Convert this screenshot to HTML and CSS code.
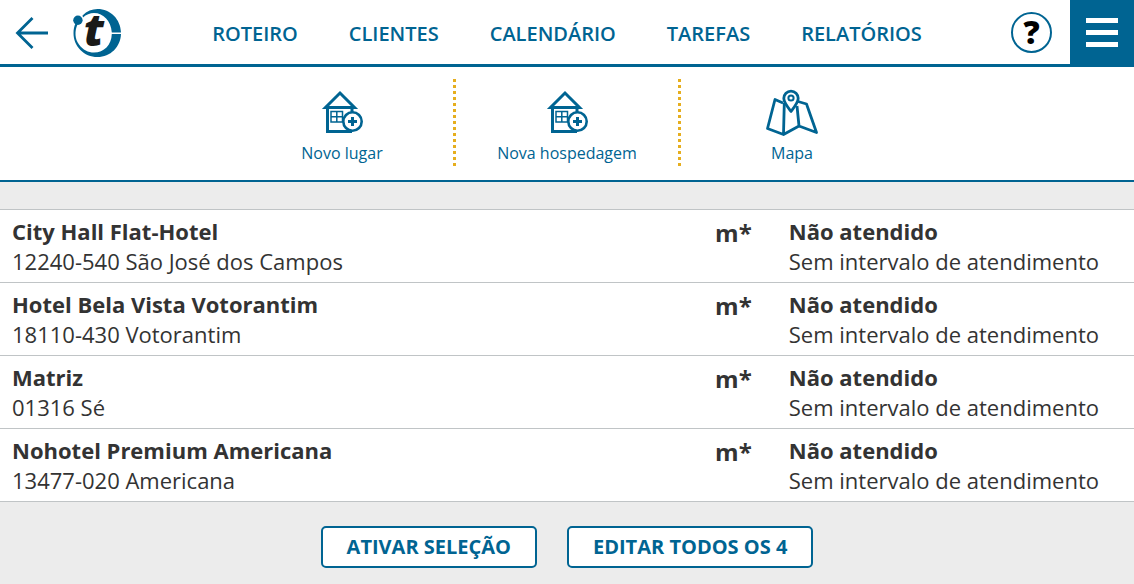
FILE: index.html
```
<!DOCTYPE html>
<html lang="pt-BR">
<head>
<meta charset="utf-8">
<meta name="viewport" content="width=device-width, initial-scale=1">
<title>Clientes</title>
<link rel="stylesheet" href="styles.css">
</head>
<body>
<header class="topbar">
  <div class="brand">
    <button class="icon-button" type="button" aria-label="Voltar">
      <svg width="34" height="34" viewBox="0 0 34 34" fill="none" stroke="currentColor" stroke-width="2.8"><path d="M17.500 2L2.500 17L17.500 32M2.500 17H33"/></svg>
    </button>
    <a class="logo" href="#" aria-label="Início">
      <svg width="50" height="50" viewBox="0 0 50 50">
        <path fill="currentColor" d="M9.500 7.500C14 3 19 1 24.500 1C37.500 1 47.500 11 48 24.500H38.800C38 13 30.500 5 21 5C17 5 13 6.500 10 9.500ZM48 26C47.500 39 37.500 49 24.500 49C11 49 0.500 38.500 0.500 25C0.500 21.500 1.200 18 2.500 15.500L4.500 16.500C1.500 23 1.800 31 6 36.500C10 42 15 44.500 21 44.500C31 44.500 38.500 37 38.800 26Z"/>
        <circle cx="4.900" cy="12.300" r="4.700" fill="currentColor"/>
        <text class="logo-letter" x="11" y="38">t</text>
      </svg>
    </a>
  </div>
  <nav class="nav">
    <a href="#">ROTEIRO</a>
    <a href="#">CLIENTES</a>
    <a href="#">CALENDÁRIO</a>
    <a href="#">TAREFAS</a>
    <a href="#">RELATÓRIOS</a>
  </nav>
  <div class="tools">
    <button class="help" type="button" aria-label="Ajuda">?</button>
    <button class="menu" type="button" aria-label="Menu">
      <svg width="32" height="30" viewBox="0 0 32 30" fill="currentColor"><path d="M0 0h32v5H0zM0 12h32v5H0zM0 24h32v5H0z"/></svg>
    </button>
  </div>
</header>

<div class="actions">
  <a class="action" href="#">
    <svg width="46" height="48" viewBox="0 0 46 48" fill="none" stroke="currentColor">
      <path stroke-width="3" d="M8.500 18V42.500H33M33 18V23M6.500 18.500H35.500L21 4L6.500 18.500Z"/>
      <path stroke-width="1.500" d="M12 22.500H23.500V33H12ZM17.800 22.500V33M12 27.700H23.500"/>
      <circle cx="33.500" cy="32.500" r="9.200" fill="#fff" stroke-width="2.600"/>
      <path stroke-width="3" d="M33.500 28V37M29 32.500H38"/>
    </svg>
    <span>Novo lugar</span>
  </a>
  <span class="divider"></span>
  <a class="action" href="#">
    <svg width="46" height="48" viewBox="0 0 46 48" fill="none" stroke="currentColor">
      <path stroke-width="3" d="M8.500 18V42.500H33M33 18V23M6.500 18.500H35.500L21 4L6.500 18.500Z"/>
      <path stroke-width="1.500" d="M12 22.500H23.500V33H12ZM17.800 22.500V33M12 27.700H23.500"/>
      <circle cx="33.500" cy="32.500" r="9.200" fill="#fff" stroke-width="2.600"/>
      <path stroke-width="3" d="M33.500 28V37M29 32.500H38"/>
    </svg>
    <span>Nova hospedagem</span>
  </a>
  <span class="divider"></span>
  <a class="action" href="#">
    <svg width="54" height="48" viewBox="0 0 54 48" fill="none" stroke="currentColor" stroke-width="2.800" stroke-linejoin="round">
      <path d="M18 14L10 10.500L2.500 39.500L18.500 45.500L34 37L51.500 43.500L41.500 15L33 12.500M19.300 14L18.500 45.500M32 17L34 37"/>
      <path d="M26 22.500C23 18.500 18.800 13.500 18.800 9.300A7.200 7.200 0 0 1 33.200 9.300C33.200 13.500 29 18.500 26 22.500Z" fill="#fff"/>
      <circle cx="26" cy="9" r="2.600" stroke-width="2"/>
    </svg>
    <span>Mapa</span>
  </a>
</div>

<main class="content">
  <table class="clients">
    <colgroup><col class="col-name"><col class="col-mark"><col></colgroup>
    <tbody>
      <tr><td><strong>City Hall Flat-Hotel</strong><br>12240-540 São José dos Campos</td><td class="mark">m*</td><td><strong>Não atendido</strong><br>Sem intervalo de atendimento</td></tr>
      <tr><td><strong>Hotel Bela Vista Votorantim</strong><br>18110-430 Votorantim</td><td class="mark">m*</td><td><strong>Não atendido</strong><br>Sem intervalo de atendimento</td></tr>
      <tr><td><strong>Matriz</strong><br>01316 Sé</td><td class="mark">m*</td><td><strong>Não atendido</strong><br>Sem intervalo de atendimento</td></tr>
      <tr><td><strong>Nohotel Premium Americana</strong><br>13477-020 Americana</td><td class="mark">m*</td><td><strong>Não atendido</strong><br>Sem intervalo de atendimento</td></tr>
    </tbody>
  </table>
  <div class="buttons">
    <button class="button" type="button">ATIVAR SELEÇÃO</button>
    <button class="button" type="button">EDITAR TODOS OS 4</button>
  </div>
</main>
</body>
</html>
```
FILE: styles.css
```
* { box-sizing: border-box; }

body {
  margin: 0;
  background: #ececec;
  color: #333;
  font: 22px/30px "Open Sans", sans-serif;
}

svg { display: block; overflow: visible; }
a { color: inherit; text-decoration: none; }
button { font: inherit; color: inherit; cursor: pointer; }

.topbar {
  display: grid;
  grid-template-columns: 1fr auto 1fr;
  align-items: center;
  min-height: 67px;
  background: #fff;
  border-bottom: 3px solid #006492;
  color: #006492;
}

.brand {
  display: flex;
  align-items: center;
  gap: 24px;
  padding: 2px 0 0 15px;
}

.icon-button { padding: 0; border: 0; background: none; }

.logo-letter {
  fill: #1a1a18;
  font: italic 800 44px "Open Sans", sans-serif;
}

.nav {
  display: flex;
  gap: 51px;
  padding-top: 3px;
  font-size: 20px;
  font-weight: 600;
}

.tools {
  display: flex;
  align-items: center;
  align-self: stretch;
  justify-content: flex-end;
  gap: 18px;
}

.help {
  width: 41px;
  height: 41px;
  padding: 0;
  border: 2px solid #006492;
  border-radius: 50%;
  background: #fff;
  color: #000;
  font-size: 32px;
  font-weight: 800;
  line-height: 36px;
}

.menu {
  display: flex;
  align-items: center;
  justify-content: center;
  align-self: stretch;
  width: 64px;
  padding: 2px 0 0;
  border: 0;
  background: #006492;
  color: #fff;
}

.actions {
  display: flex;
  justify-content: center;
  padding: 11px 0;
  background: #fff;
  border-bottom: 2px solid #006492;
  color: #006492;
  font-size: 16px;
}

.action {
  display: flex;
  flex-direction: column;
  align-items: center;
  gap: 1px;
  width: 222px;
  padding-top: 11px;
  line-height: 31px;
}

.divider {
  width: 3px;
  background: repeating-linear-gradient(transparent 0 1px, #e6ae1e 1px 4px, transparent 4px 6px);
}

.content { padding-top: 27px; }

.clients {
  width: 100%;
  table-layout: fixed;
  border-collapse: separate;
  border-spacing: 0;
  border-top: 1px solid #c0c4c6;
  background: #fff;
}

.col-name { width: 62%; }
.col-mark { width: 6.5%; }

.clients td {
  padding: 6px 0 6px 12px;
  border-bottom: 1px solid #c0c4c6;
  vertical-align: top;
}

.clients .mark {
  padding-top: 8px;
  font-size: 24px;
  font-weight: 700;
}

.buttons {
  display: flex;
  flex-wrap: wrap;
  justify-content: center;
  gap: 30px;
  padding: 24px 12px 16px;
}

.button {
  padding: 4px 24px;
  border: 2px solid #006492;
  border-radius: 5px;
  background: #fff;
  color: #006492;
  font-size: 20px;
  font-weight: 700;
}
```
